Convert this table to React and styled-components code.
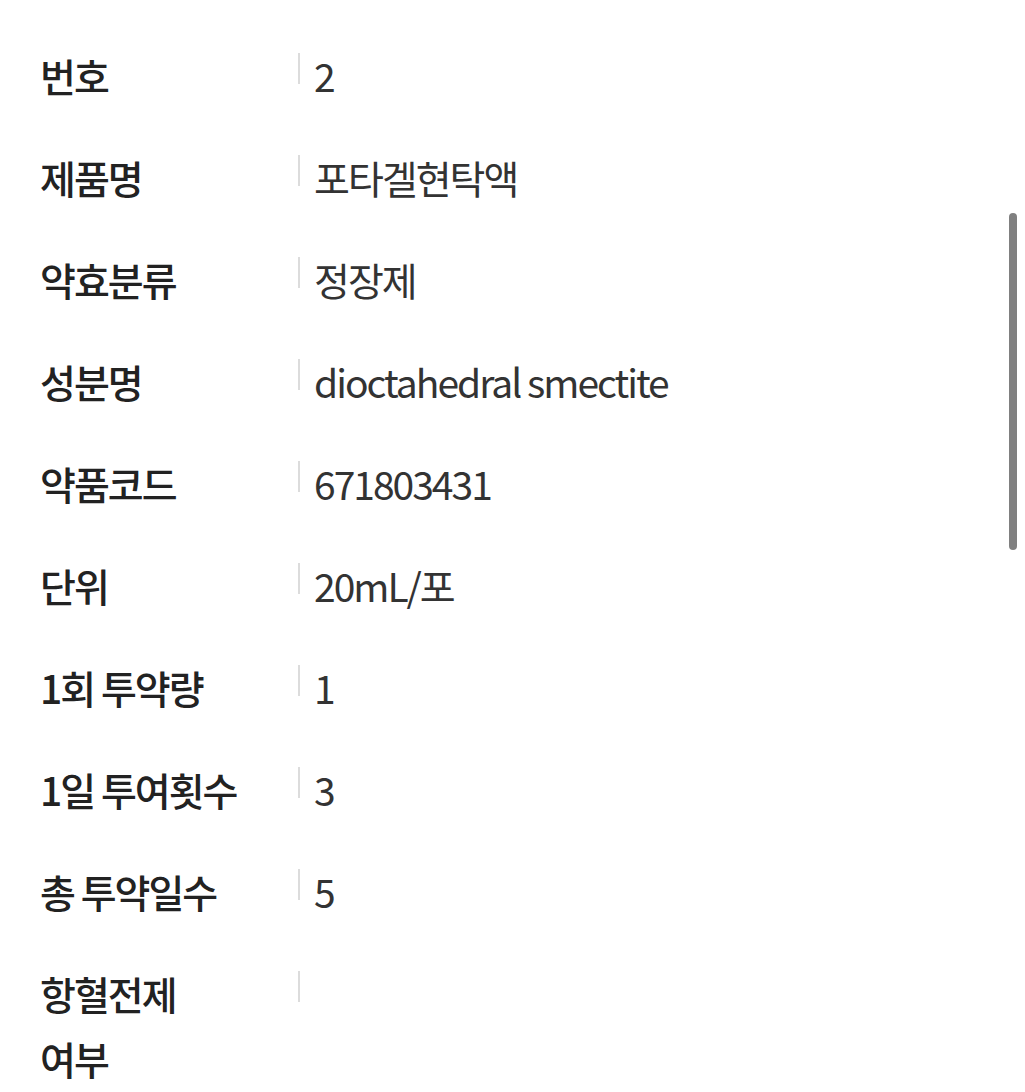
import React from "react";
import styled, { createGlobalStyle } from "styled-components";

const Global = createGlobalStyle`
  html, body {
    margin: 0;
    padding: 0;
    background: #ffffff;
    overflow: hidden;
  }
  body {
    font-family: "Noto Sans CJK KR", "Noto Sans", sans-serif;
  }
`;

const Page = styled.div`
  position: relative;
  width: 1025px;
  height: 1092px;
  overflow: hidden;
  background: #fff;
`;

const List = styled.dl`
  margin: 0;
  padding: 25px 0 0 40px;
  display: flex;
  flex-direction: column;
`;

const Row = styled.div`
  display: grid;
  grid-template-columns: 258px 1fr;
  padding: 18px 0 19px;
`;

const Label = styled.dt`
  margin: 0;
  font-size: 39px;
  line-height: 65px;
  font-weight: 500;
  color: #222222;
  letter-spacing: -2px;
  padding-right: 53px;
  word-break: keep-all;
`;

const Value = styled.dd`
  margin: 0;
  position: relative;
  padding-left: 16px;
  font-size: 39px;
  line-height: 65px;
  font-weight: 400;
  color: #333333;
  letter-spacing: -2px;
  &::before {
    content: "";
    position: absolute;
    left: 0;
    top: 10px;
    width: 1.5px;
    height: 31px;
    background: #dcdcdc;
  }
`;

const Thumb = styled.div`
  position: absolute;
  left: 1009px;
  top: 213px;
  width: 8px;
  height: 337px;
  border-radius: 4px;
  background: #808080;
`;

const rows = [
  ["번호", "2"],
  ["제품명", "포타겔현탁액"],
  ["약효분류", "정장제"],
  ["성분명", "dioctahedral smectite"],
  ["약품코드", "671803431"],
  ["단위", "20mL/포"],
  ["1회 투약량", "1"],
  ["1일 투여횟수", "3"],
  ["총 투약일수", "5"],
  ["항혈전제 여부", ""],
];

export default function App() {
  return (
    <Page>
      <Global />
      <List>
        {rows.map(([k, v]) => (
          <Row key={k}>
            <Label>{k}</Label>
            <Value>{v}</Value>
          </Row>
        ))}
      </List>
      <Thumb />
    </Page>
  );
}
